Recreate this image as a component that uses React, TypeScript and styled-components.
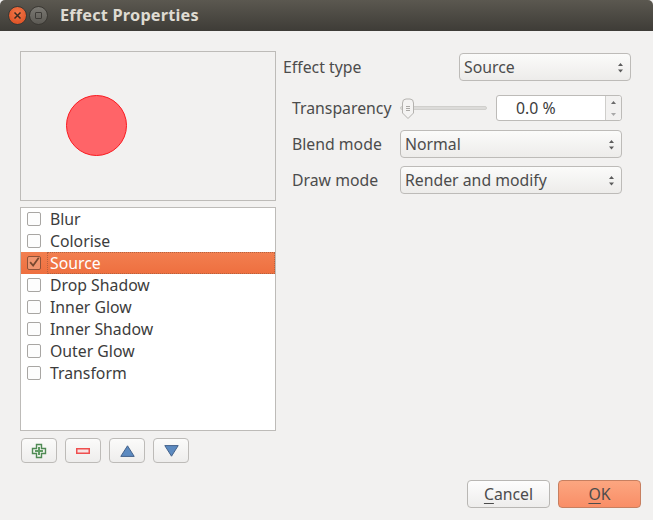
import React from "react";
import styled, { createGlobalStyle } from "styled-components";

const Global = createGlobalStyle`
  html, body {
    margin: 0;
    padding: 0;
    background: #f2f1f0;
  }
`;

const effects = [
  { name: "Blur", on: false },
  { name: "Colorise", on: false },
  { name: "Source", on: true },
  { name: "Drop Shadow", on: false },
  { name: "Inner Glow", on: false },
  { name: "Inner Shadow", on: false },
  { name: "Outer Glow", on: false },
  { name: "Transform", on: false },
];

const Arrows = () => (
  <svg width="7" height="13" viewBox="0 0 7 13">
    <path d="M3.5 2 L6 5 H1 Z M3.5 11.5 L6 8.5 H1 Z" fill="#5c5c5c" />
  </svg>
);

const Combo: React.FC<{ text: string; wide?: boolean }> = ({ text, wide }) => (
  <ComboBox $wide={wide}>
    <ComboText>{text}</ComboText>
    <Arrows />
  </ComboBox>
);

const App: React.FC = () => {
  return (
    <Dialog>
      <Global />
      <TitleBar>
        <CloseBtn>
          <svg width="9" height="9" viewBox="0 0 9 9">
            <path d="M1.5 1.5 L7.5 7.5 M7.5 1.5 L1.5 7.5" stroke="#3a2a20" strokeWidth="1.5" />
          </svg>
        </CloseBtn>
        <MaxBtn>
          <MaxGlyph />
        </MaxBtn>
        <Title>Effect Properties</Title>
      </TitleBar>
      <Content>
        <LeftCol>
          <Preview>
            <Circle />
          </Preview>
          <EffectList>
            {effects.map((e) => (
              <EffectRow key={e.name} $selected={e.on}>
                <Check $selected={e.on}>
                  {e.on && (
                    <svg width="14" height="14" viewBox="0 0 14 14">
                      <path d="M2.5 6 L6 10 L12.5 1" fill="none" stroke="#77482f" strokeWidth="2" />
                    </svg>
                  )}
                </Check>
                <RowLabel $selected={e.on}>{e.name}</RowLabel>
              </EffectRow>
            ))}
          </EffectList>
          <ToolRow>
            <ToolBtn>
              <svg width="16" height="16" viewBox="0 0 16 16">
                <path d="M5.5 1.5 H10.5 V5.5 H14.5 V10.5 H10.5 V14.5 H5.5 V10.5 H1.5 V5.5 H5.5 Z" fill="#f1f4ef" stroke="#4f8a54" strokeWidth="1.4" />
                <path d="M8 4 V12 M4 8 H12" stroke="#5f9a62" strokeWidth="2" />
              </svg>
            </ToolBtn>
            <ToolBtn>
              <svg width="14" height="6" viewBox="0 0 14 6">
                <rect x="0.75" y="0.75" width="12.5" height="4.5" fill="#f6e4e4" stroke="#ef4f4f" strokeWidth="1.5" />
              </svg>
            </ToolBtn>
            <ToolBtn>
              <svg width="15" height="12" viewBox="0 0 15 12">
                <path d="M7.5 0.8 L14.2 11.4 H0.8 Z" fill="#5c8ac0" stroke="#44628a" strokeWidth="1" />
              </svg>
            </ToolBtn>
            <ToolBtn>
              <svg width="15" height="12" viewBox="0 0 15 12">
                <path d="M7.5 11.2 L14.2 0.6 H0.8 Z" fill="#5c8ac0" stroke="#44628a" strokeWidth="1" />
              </svg>
            </ToolBtn>
          </ToolRow>
        </LeftCol>
        <RightCol>
          <TypeRow>
            <TypeLabel>Effect type</TypeLabel>
            <Combo text="Source" />
          </TypeRow>
          <FormGrid>
            <FormLabel>Transparency</FormLabel>
            <SliderRow>
              <Slider>
                <Groove />
                <Handle>
                  <svg width="14" height="22" viewBox="0 0 14 22">
                    <path d="M1.5 5 Q1.5 1 5 1 H9 Q12.5 1 12.5 5 V15 L7 20.5 L1.5 15 Z" fill="#f4f3f2" stroke="#b4b2af" />
                    <path d="M5 8.5 H9 M5 10.5 H9 M5 12.5 H9" stroke="#aaa8a5" />
                  </svg>
                </Handle>
              </Slider>
              <Spin>
                <SpinValue>0.0 %</SpinValue>
                <SpinArrows>
                  <svg width="7" height="5" viewBox="0 0 7 5">
                    <path d="M3.5 1 L6 4 H1 Z" fill="#6a6a6a" />
                  </svg>
                  <svg width="7" height="5" viewBox="0 0 7 5">
                    <path d="M3.5 4 L6 1 H1 Z" fill="#a8a8a8" />
                  </svg>
                </SpinArrows>
              </Spin>
            </SliderRow>
            <FormLabel>Blend mode</FormLabel>
            <Combo text="Normal" wide />
            <FormLabel>Draw mode</FormLabel>
            <Combo text="Render and modify" wide />
          </FormGrid>
        </RightCol>
      </Content>
      <Footer>
        <DialogBtn>
          <u>C</u>ancel
        </DialogBtn>
        <DialogBtn $primary>
          <u>O</u>K
        </DialogBtn>
      </Footer>
    </Dialog>
  );
};

export default App;

const Dialog = styled.div`
  width: 653px;
  height: 520px;
  display: flex;
  flex-direction: column;
  background: #f2f1f0;
  color: #4c4c4c;
  font-family: "Noto Sans", "DejaVu Sans", sans-serif;
  font-size: 15.8px;
  overflow: hidden;
`;

const TitleBar = styled.div`
  height: 31px;
  flex: none;
  display: flex;
  align-items: center;
  padding-left: 8px;
  background: linear-gradient(#5b5850, #3e3c37);
  border-radius: 5px 5px 0 0;
`;

const CloseBtn = styled.div`
  width: 19px;
  height: 19px;
  box-sizing: border-box;
  border-radius: 50%;
  display: flex;
  align-items: center;
  justify-content: center;
  background: radial-gradient(circle at 50% 35%, #f3784a, #d9491c);
  border: 1px solid #3a3833;
`;

const MaxBtn = styled(CloseBtn)`
  margin-left: 2px;
  background: linear-gradient(#7b7973, #5c5a54);
`;

const MaxGlyph = styled.div`
  width: 7px;
  height: 7px;
  box-sizing: border-box;
  border: 1.5px solid #3d3b37;
  border-radius: 1px;
`;

const Title = styled.div`
  margin-left: 12px;
  padding-bottom: 1px;
  color: #dfdbd2;
  font-weight: 700;
  font-size: 16.3px;
  letter-spacing: 0.2px;
`;

const Content = styled.div`
  flex: 1;
  display: flex;
  padding: 20px 22px 0 20px;
  min-height: 0;
`;

const LeftCol = styled.div`
  width: 256px;
  flex: none;
  display: flex;
  flex-direction: column;
`;

const Preview = styled.div`
  height: 150px;
  box-sizing: border-box;
  border: 1px solid #bdbbb8;
  padding: 43px 0 0 45px;
`;

const Circle = styled.div`
  width: 61px;
  height: 61px;
  box-sizing: border-box;
  border-radius: 50%;
  background: #ff6468;
  border: 1px solid #fa1a20;
`;

const EffectList = styled.div`
  margin-top: 6px;
  height: 224px;
  box-sizing: border-box;
  border: 1px solid #bdbbb8;
  background: #fff;
`;

const EffectRow = styled.div<{ $selected?: boolean }>`
  height: 22px;
  display: flex;
  align-items: center;
  padding-left: 6px;
  color: ${(p) => (p.$selected ? "#fff" : "#3c3c3c")};
  background: ${(p) => (p.$selected ? "linear-gradient(#f27f50, #ee6f3f)" : "transparent")};
`;

const Check = styled.div<{ $selected?: boolean }>`
  width: 14px;
  height: 14px;
  flex: none;
  box-sizing: border-box;
  margin-right: 6px;
  border-radius: 2px;
  display: flex;
  align-items: center;
  justify-content: center;
  border: 1px solid ${(p) => (p.$selected ? "#8f5238" : "#a8a6a3")};
  background: ${(p) => (p.$selected ? "#f0956f" : "#fdfdfd")};
`;

const RowLabel = styled.div<{ $selected?: boolean }>`
  flex: 1;
  height: 100%;
  box-sizing: border-box;
  display: flex;
  align-items: center;
  padding: 0 0 0 2px;
  border: 1px dotted ${(p) => (p.$selected ? "#b5623f" : "transparent")};
`;

const ToolRow = styled.div`
  display: flex;
  gap: 8px;
  margin-top: 7px;
  padding-left: 1px;
`;

const ToolBtn = styled.div`
  width: 36px;
  height: 25px;
  box-sizing: border-box;
  display: flex;
  align-items: center;
  justify-content: center;
  border: 1px solid #bdbbb8;
  border-radius: 4px;
  background: linear-gradient(#fbfbfa, #eeedec);
`;

const RightCol = styled.div`
  flex: 1;
  margin-left: 7px;
  display: flex;
  flex-direction: column;
  padding-top: 2px;
`;

const TypeRow = styled.div`
  display: flex;
  align-items: center;
  justify-content: space-between;
`;

const TypeLabel = styled.div``;

const ComboBox = styled.div<{ $wide?: boolean }>`
  width: ${(p) => (p.$wide ? "222px" : "172px")};
  height: 28px;
  box-sizing: border-box;
  display: flex;
  align-items: center;
  justify-content: space-between;
  padding: 0 6px 0 4px;
  border: 1px solid #bdbbb8;
  border-radius: 4px;
  background: linear-gradient(#fbfbfa, #edecea);
`;

const ComboText = styled.span`
  padding-bottom: 1px;
`;

const FormGrid = styled.div`
  display: grid;
  grid-template-columns: 108px 222px;
  align-items: center;
  row-gap: 8px;
  margin-top: 14px;
  padding-left: 9px;
`;

const FormLabel = styled.div`
  padding-bottom: 1px;
`;

const SliderRow = styled.div`
  display: flex;
  align-items: center;
  justify-content: space-between;
  margin-bottom: 1px;
`;

const Slider = styled.div`
  position: relative;
  width: 87px;
  height: 26px;
  display: flex;
  align-items: center;
`;

const Groove = styled.div`
  width: 100%;
  height: 4px;
  border-radius: 2px;
  background: #dcdbd9;
  border: 1px solid #d0cfcc;
  box-sizing: border-box;
`;

const Handle = styled.div`
  position: absolute;
  left: 1px;
  top: 3px;
  line-height: 0;
`;

const Spin = styled.div`
  width: 126px;
  height: 26px;
  box-sizing: border-box;
  display: flex;
  border: 1px solid #bdbbb8;
  border-radius: 3px;
  background: #fff;
`;

const SpinValue = styled.div`
  flex: 1;
  display: flex;
  align-items: center;
  padding: 0 0 1px 19px;
  color: #3c3c3c;
`;

const SpinArrows = styled.div`
  width: 16px;
  box-sizing: border-box;
  display: flex;
  flex-direction: column;
  align-items: center;
  justify-content: space-around;
  border-left: 1px solid #cfcecb;
  background: #f2f1f0;
  border-radius: 0 3px 3px 0;
`;

const Footer = styled.div`
  flex: none;
  display: flex;
  justify-content: flex-end;
  gap: 8px;
  padding: 0 12px 12px 0;
`;

const DialogBtn = styled.div<{ $primary?: boolean }>`
  width: 83px;
  height: 28px;
  box-sizing: border-box;
  display: flex;
  align-items: center;
  justify-content: center;
  padding-bottom: 1px;
  border-radius: 4px;
  border: 1px solid ${(p) => (p.$primary ? "#c77f60" : "#b9b7b4")};
  background: ${(p) => (p.$primary ? "linear-gradient(#fca680, #f98e67)" : "linear-gradient(#fdfdfd, #eeedec)")};
  color: #4c4c4c;
  u {
    text-underline-offset: 3px;
  }
`;
